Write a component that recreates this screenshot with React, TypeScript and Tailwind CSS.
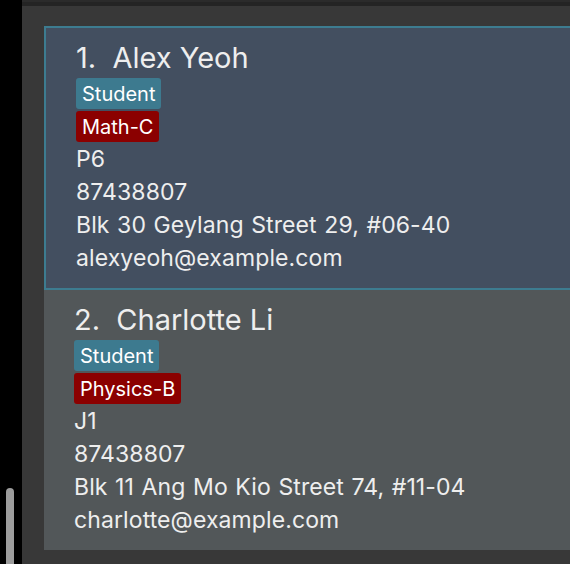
import React from "react";

interface Person {
  name: string;
  level: string;
  tags: { label: string; kind: "role" | "subject" }[];
  phone: string;
  address: string;
  email: string;
}

const people: Person[] = [
  {
    name: "Alex Yeoh",
    level: "P6",
    tags: [
      { label: "Student", kind: "role" },
      { label: "Math-C", kind: "subject" },
    ],
    phone: "87438807",
    address: "Blk 30 Geylang Street 29, #06-40",
    email: "alexyeoh@example.com",
  },
  {
    name: "Charlotte Li",
    level: "J1",
    tags: [
      { label: "Student", kind: "role" },
      { label: "Physics-B", kind: "subject" },
    ],
    phone: "87438807",
    address: "Blk 11 Ang Mo Kio Street 74, #11-04",
    email: "charlotte@example.com",
  },
];

const PersonCard: React.FC<{ person: Person; index: number; selected: boolean }> = ({
  person,
  index,
  selected,
}) => {
  return (
    <div
      className={`w-[540px] shrink-0 ${
        selected ? "border-2 border-[#3d7c90] bg-[#434f60]" : "bg-[#525759]"
      }`}
    >
      <div className="flex h-[260px] flex-col items-start pl-[30px] pt-[13px] text-[#eeeeee]">
        <p className="whitespace-pre text-[29px] leading-[34px]">
          {index}.  {person.name}
        </p>
        <div className="mt-[3px] flex flex-col items-start gap-[2px]">
          {person.tags.map((t, i) => (
            <span
              key={i}
              className={`flex h-[31px] items-center rounded-[3px] px-[6px] text-[20px] text-white ${
                t.kind === "role" ? "bg-[#3d7a8f]" : "bg-[#8b0000]"
              }`}
            >
              {t.label}
            </span>
          ))}
        </div>
        <div className="mt-px flex flex-col text-[23px] leading-[33px] tracking-[0.1px] [word-spacing:1px]">
          <p>{person.level}</p>
          <p>{person.phone}</p>
          <p>{person.address}</p>
          <p>{person.email}</p>
        </div>
      </div>
    </div>
  );
};

export default function App() {
  return (
    <div
      className="flex h-[564px] w-[570px] overflow-hidden bg-[#383838]"
      style={{ fontFamily: "Inter, 'Noto Sans', sans-serif" }}
    >
      {/* scroll track */}
      <div className="flex w-[22px] shrink-0 flex-col justify-end bg-black pl-[6px]">
        <div className="h-[76px] w-[8px] rounded-t-full bg-[#9c9c9c]" />
      </div>

      <div className="flex min-w-0 flex-1 flex-col">
        <div className="h-[2px] bg-[#2b2b2b]" />
        <div className="h-[4px] bg-[#242424]" />
        <div className="flex flex-col pl-[22px] pt-[20px]">
          {people.map((p, i) => (
            <PersonCard key={i} person={p} index={i + 1} selected={i === 0} />
          ))}
        </div>
      </div>
    </div>
  );
}
